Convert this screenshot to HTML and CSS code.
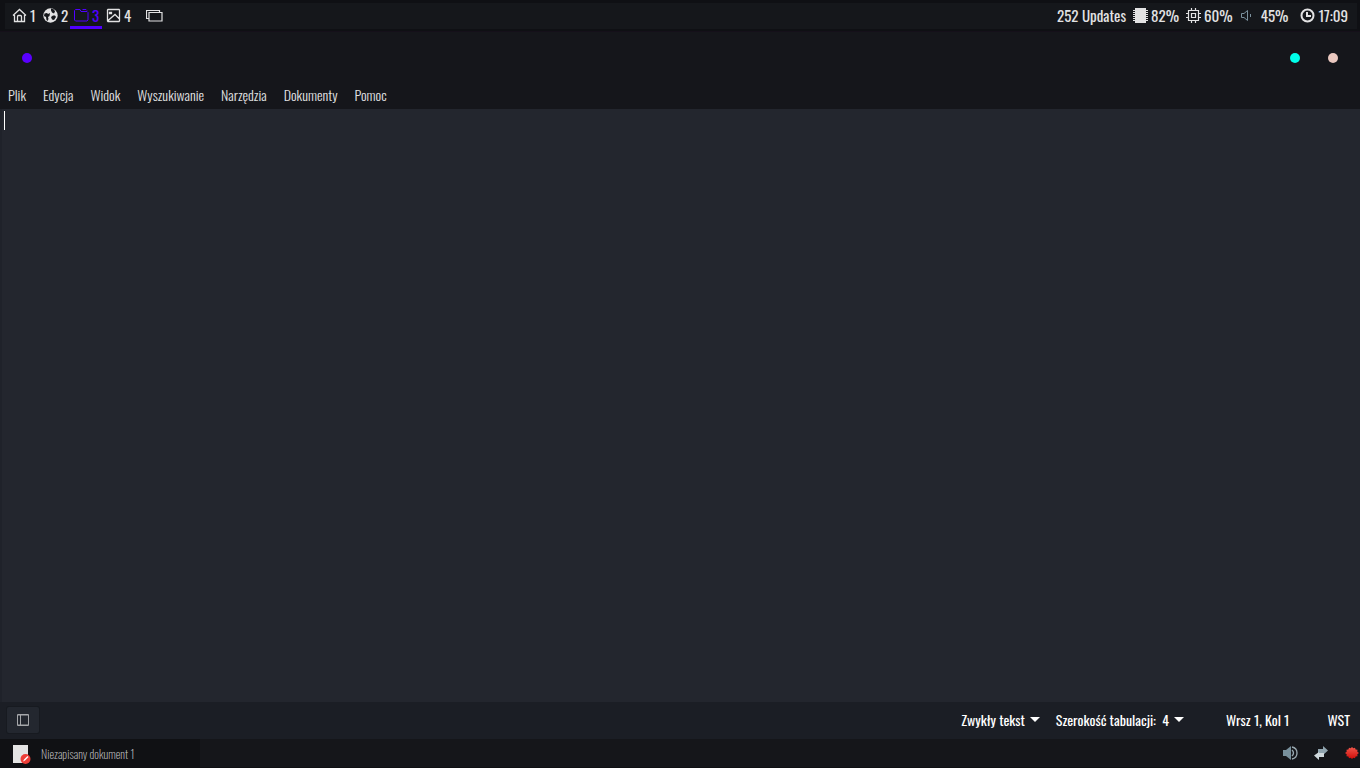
FILE: index.html
```html
<!DOCTYPE html>
<html lang="pl">
<head>
<meta charset="utf-8">
<title>Niezapisany dokument 1</title>
<link rel="stylesheet" href="styles.css">
</head>
<body>
<header class="panel">
  <div class="panel-inner">
    <nav class="workspaces" aria-label="Workspaces">
      <button class="workspace"><svg class="icon" viewBox="0 0 15 15"><path d="M1 7.500 7.500 1.500 14 7.500M2.500 7v6.500h10V7M5.500 13.500V8.500q0-1 1-1h2q1 0 1 1v5" fill="none" stroke="currentColor" stroke-width="1.300"/></svg>1</button>
      <button class="workspace"><svg class="icon" viewBox="0 0 15 15"><circle cx="7.500" cy="7.500" r="7.200" fill="currentColor"/><path d="M1.500 5.500 4 5l1 1 2-1-.5 3L5 9l.5 2-1 2-1-1L3 9 1 8zM8 .5l3 1 1 2-1 2-2-1-1-2zM8 9l2-1.500h2l1 1.500-2 3-2-.5z" fill="#15171b"/></svg>2</button>
      <button class="workspace active"><svg class="icon" viewBox="0 0 15 15"><path d="M1.500 1.500H6l1 2h6l1 1v7.500l-1 1H1.500l-1-1V2.500zM8.500 1.500H12l1 1" fill="none" stroke="currentColor"/></svg>3</button>
      <button class="workspace"><svg class="icon" viewBox="0 0 15 15"><path d="M2 1.500h11l.5.500v11l-.5.500H2l-.5-.5V2zM1.500 13 9 6.500l4.500 4.500M3.500 4.500h2v1h-2z" fill="none" stroke="currentColor" stroke-width="1.300"/></svg>4</button>
    </nav>
    <button class="layout" aria-label="Layout"><svg class="icon wide" viewBox="0 0 17 15"><path d="M3 10.500H.5V2.500h13V4M3 4.500h13v8.500H3z" fill="none" stroke="currentColor" stroke-width="1.200"/></svg></button>
    <div class="stats">
      <span class="updates">252 Updates</span>
      <span class="stat"><svg class="icon" viewBox="0 0 15 15"><path d="M2 0h11v15H2z" fill="currentColor"/><path d="M0 2.500h15M0 4.500h15M0 6.500h15M0 8.500h15M0 10.500h15M0 12.500h15" stroke="currentColor"/></svg>82%</span>
      <span class="stat"><svg class="icon" viewBox="0 0 15 15"><path d="M2.500 2.500h10v10h-10zM5.500 5.500h4v4h-4zM5.500 0v2M9.500 0v2M5.500 13v2M9.500 13v2M0 5.500h2M0 9.500h2M13 5.500h2M13 9.500h2" fill="none" stroke="currentColor" stroke-width="1.200"/></svg>60%</span>
      <span class="stat volume"><svg class="icon" viewBox="0 0 15 15"><path d="M1.500 5.500v4H4l3.500 3V2.500L4 5.500zM10.500 6v3" fill="none" stroke="#7b909c"/></svg>45%</span>
      <span class="stat"><svg class="icon" viewBox="0 0 15 15"><circle cx="7.500" cy="7.500" r="6" fill="none" stroke="currentColor" stroke-width="2"/><path d="M7 4v4h4" fill="none" stroke="currentColor" stroke-width="2"/></svg><time>17:09</time></span>
    </div>
  </div>
</header>
<main class="window">
  <div class="titlebar">
    <button class="dot purple" aria-label="Close"></button>
    <span class="controls"><button class="dot cyan" aria-label="Minimize"></button><button class="dot pink" aria-label="Maximize"></button></span>
  </div>
  <nav class="menubar">
    <button>Plik</button><button>Edycja</button><button>Widok</button><button>Wyszukiwanie</button><button>Narzędzia</button><button>Dokumenty</button><button>Pomoc</button>
  </nav>
  <div class="editor" contenteditable="true" role="textbox" aria-label="Dokument"><span class="caret"></span></div>
  <footer class="statusbar">
    <button class="side-toggle" aria-label="Panel boczny"><svg viewBox="0 0 12 12"><path d="M.5.500h11v11H.5zM3.500 1v10M0 2h12M0 10h12" fill="none" stroke="#a5a7aa"/><path d="M1 2h2v8H1zM4 2h7v8H4z" fill="#23272f"/></svg></button>
    <div class="status-items">
      <button class="choice">Zwykły tekst<svg viewBox="0 0 10 5"><path d="M0 0h10L5 5z" fill="#fff"/></svg></button>
      <button class="choice">Szerokość tabulacji:&nbsp; 4<svg viewBox="0 0 10 5"><path d="M0 0h10L5 5z" fill="#fff"/></svg></button>
      <span class="position">Wrsz 1, Kol 1</span>
      <span class="mode">WST</span>
    </div>
  </footer>
</main>
<footer class="taskbar">
  <button class="task"><svg viewBox="0 0 18 20"><path d="M0 1h15v18H0z" fill="#e4e4e4"/><circle cx="12.500" cy="15" r="5" fill="#ee3e38"/><path d="m10 17.500 1-2 3.500-3.500 1 1-3.500 3.500z" fill="#fff"/></svg>Niezapisany dokument 1</button>
  <div class="tray">
    <svg viewBox="0 0 16 16"><path d="M1 5h3l5-4v14l-5-4H1z" fill="#78909c"/><path d="M10 5q3 3 0 6M10 2q5 1 5 6t-5 6" fill="none" stroke="#9aa9b1" stroke-width="1.300"/></svg>
    <svg viewBox="0 0 16 16"><path d="M5 4h5V1l5 4.500-5 4.500V8H5z" fill="#90a4ae"/><path d="M11 8v4H6v3L1 10.500 6 7v1z" fill="#cfd8dc"/></svg>
    <svg viewBox="0 0 16 16"><defs><linearGradient id="star" x2="0" y2="1"><stop stop-color="#f0584c"/><stop offset="1" stop-color="#d00c08"/></linearGradient></defs><path d="m8 2 1.300 1.300L11 2.800l.6 1.700 1.900.3-.2 1.900L15 8l-1.700 1.300.2 1.900-1.900.3-.6 1.700-1.700-.5L8 14l-1.300-1.300-1.700.5-.6-1.700-1.900-.3.2-1.900L1 8l1.700-1.300-.2-1.900 1.900-.3.6-1.700 1.700.5z" fill="url(#star)"/></svg>
  </div>
</footer>
</body>
</html>
```
FILE: styles.css
```css
* { box-sizing: border-box; }
body { margin: 0; min-height: 100vh; display: flex; flex-direction: column; background: #15161b; color: #e2e2e3; font: 14px/20px Oswald, "Liberation Sans Narrow", "Liberation Sans", sans-serif; }
button { border: 0; padding: 0; background: none; color: inherit; font: inherit; text-align: left; white-space: nowrap; }
svg { display: block; flex: none; }
.panel { height: 32px; padding: 3px 3px 2px 5px; background: #0f1014; border-bottom: 1px solid #15101a; }
.panel-inner { height: 26px; display: flex; align-items: center; background: #15171b; font-size: 15px; }
.workspaces { display: flex; padding-left: 7px; }
.workspace { height: 26px; width: 30px; display: flex; align-items: center; gap: 3px; padding-bottom: 3px; }
.workspace.active { width: 32px; margin: 0 4px 0 -1px; padding-left: 4px; box-shadow: inset 0 -3px #5000ff; color: #5000ff; }
.workspace:nth-child(2) { width: 29px; margin-left: 1px; margin-right: -1px; }
.icon { width: 15px; height: 15px; margin-top: 2px; }
.icon.wide { width: 17px; margin-top: 0; }
.layout { margin-left: 10px; padding-bottom: 1px; }
.stats { margin-left: auto; display: flex; align-items: center; gap: 7px; padding: 0 9px 3px 0; white-space: nowrap; }
.stat { display: flex; align-items: center; gap: 3px; }
.volume { gap: 6px; margin-right: 5px; }
.window { flex: 1; display: flex; flex-direction: column; }
.titlebar { height: 50px; display: flex; align-items: center; justify-content: space-between; padding: 4px 22px 2px; }
.controls { display: flex; gap: 28px; }
.dot { width: 10px; height: 10px; border-radius: 50%; }
.purple { background: #5a00ff; }
.cyan { background: #00ffea; }
.pink { background: #eac8c0; }
.menubar { height: 27px; display: flex; align-items: center; gap: 17px; padding: 0 8px 2px; font-weight: 300; }
.editor { flex: 1; background: #23262e; border-left: 2px solid #1f222a; padding: 2px; outline: 0; }
.caret { display: block; width: 1px; height: 19px; background: #fff; }
.statusbar { height: 37px; display: flex; align-items: center; justify-content: space-between; padding: 0 10px 1px 7px; background: #1b1e25; color: #fff; }
.side-toggle { width: 32px; height: 26px; display: grid; place-items: center; background: #23272f; border-radius: 2px; box-shadow: 0 0 0 1px #171a20; }
.side-toggle svg { width: 12px; height: 12px; }
.status-items { display: flex; padding-bottom: 1px; }
.choice { display: flex; align-items: center; gap: 5px; margin-right: 16px; }
.choice svg { width: 10px; height: 5px; }
.position { margin-left: 26px; margin-right: 38px; }
.taskbar { height: 29px; display: flex; justify-content: space-between; background: #15161a; border-bottom: 1px solid #0f1013; }
.task { width: 200px; display: flex; align-items: center; gap: 10px; padding: 1px 0 0 13px; background: #101114; color: #c4c5c7; font-size: 12px; font-weight: 200; }
.task svg { width: 18px; height: 20px; }
.tray { display: flex; align-items: center; gap: 15px; }
.tray svg { width: 16px; height: 16px; }
```
